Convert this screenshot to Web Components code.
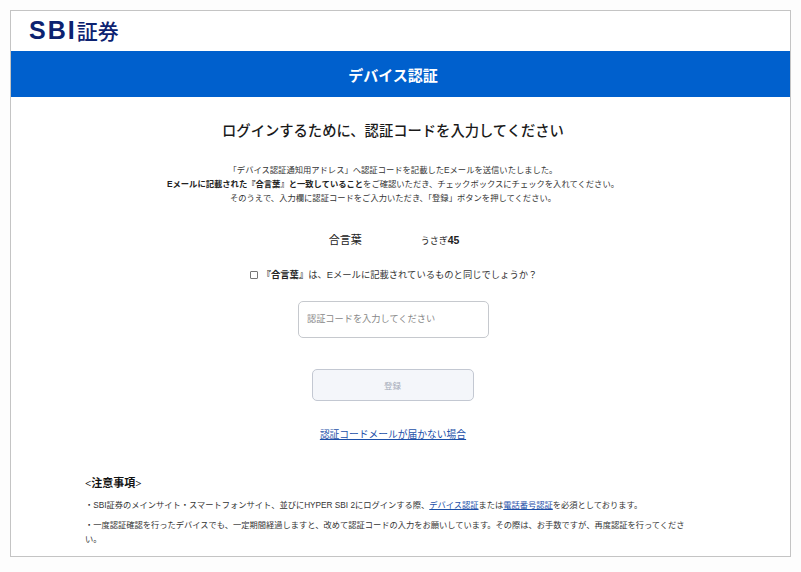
<!DOCTYPE html>
<html lang="ja">
<head>
<meta charset="utf-8">
<title>デバイス認証</title>
<style>
html, body { margin: 0; background: #fdfdfd; }
body { font-family: "Liberation Sans", "Noto Sans CJK JP", sans-serif; color: #333; }
</style>
</head>
<body>
<auth-page>
	<site-header></site-header>
	<title-bar>デバイス認証</title-bar>
	<auth-form></auth-form>
	<notice-list></notice-list>
</auth-page>

<script>
const templateAuthPage = document.createElement('template');
templateAuthPage.innerHTML = `
<style>
:host {
	display: block;
	box-sizing: border-box;
	width: 781px;
	height: 547px;
	margin: 10px 0 0 10px;
	background: #fff;
	border: 1px solid #c4c4c4;
	overflow: hidden;
}
</style>
<slot></slot>
`

class AuthPage extends HTMLElement {
	constructor() {
		super();
		this.attachShadow({mode: 'open'});
		this.shadowRoot.appendChild(templateAuthPage.content.cloneNode(true));
	}
}

const templateSiteHeader = document.createElement('template');
templateSiteHeader.innerHTML = `
<style>
:host {
	display: flex;
	align-items: center;
	box-sizing: border-box;
	height: 40px;
	padding: 0 0 2px 18px;
	color: #0c2270;
}
.sbi {
	font: bold 25px "Liberation Sans", sans-serif;
	letter-spacing: 2px;
}
.sho {
	font: 500 21px "Noto Sans CJK JP", sans-serif;
}
</style>
<span class="sbi">SBI</span><span class="sho">証券</span>
`

class SiteHeader extends HTMLElement {
	constructor() {
		super();
		this.attachShadow({mode: 'open'});
		this.shadowRoot.appendChild(templateSiteHeader.content.cloneNode(true));
	}
}

const templateTitleBar = document.createElement('template');
templateTitleBar.innerHTML = `
<style>
:host {
	display: flex;
	align-items: center;
	justify-content: center;
	height: 46px;
	padding-right: 15px;
	background: #0060cd;
	color: #fff;
	font: bold 15px "Noto Sans CJK JP", sans-serif;
}
</style>
<slot></slot>
`

class TitleBar extends HTMLElement {
	constructor() {
		super();
		this.attachShadow({mode: 'open'});
		this.shadowRoot.appendChild(templateTitleBar.content.cloneNode(true));
	}
}

const templateAuthForm = document.createElement('template');
templateAuthForm.innerHTML = `
<style>
:host {
	display: flex;
	flex-direction: column;
	align-items: center;
	padding-right: 15px;
	font: 8.3px/14px "Liberation Sans", "Noto Sans CJK JP", sans-serif;
	color: #333;
}
h1 {
	margin: 21px 0 0;
	font: 500 14.3px/24px "Noto Sans CJK JP", sans-serif;
	color: #1a1a1a;
}
.lead {
	margin: 21px 0 0;
	text-align: center;
	white-space: nowrap;
}
.lead b { color: #222; }
.phrase {
	display: flex;
	margin: 27px 0 0 2px;
	font-size: 11px;
	line-height: 16px;
	color: #222;
}
.phrase span:first-child { width: 92px; }
.phrase span:last-child { font-size: 9px; }
.phrase b { font-size: 10.5px; }
label {
	display: flex;
	align-items: center;
	margin: 18px 0 0 1px;
	font-size: 9.3px;
	line-height: 16px;
}
input[type=checkbox] {
	appearance: none;
	box-sizing: border-box;
	width: 8px;
	height: 8px;
	margin: 0 4px 0 0;
	background: #fff;
	border: 1px solid #777;
	border-radius: 1px;
}
label b { color: #222; }
input[type=text] {
	box-sizing: border-box;
	display: block;
	width: 191px;
	height: 37px;
	margin: 18px 0 0 1px;
	padding: 0 8px 3px;
	background: #fff;
	border: 1px solid #c6c9ce;
	border-radius: 5px;
	font: 9.2px "Noto Sans CJK JP", sans-serif;
	outline: none;
}
input[type=text]::placeholder { color: #888; }
button {
	display: block;
	box-sizing: border-box;
	width: 162px;
	height: 32px;
	margin: 31px 0 0 -1px;
	padding: 0;
	background: #f4f6fa;
	border: 1px solid #c3c8d2;
	border-radius: 5px;
	color: #a4abb8;
	font: 8.5px "Noto Sans CJK JP", sans-serif;
}
a {
	margin: 26px 0 0;
	color: #1c4fa8;
	font-size: 9.75px;
	line-height: 16px;
}
</style>
<h1>ログインするために、認証コードを入力してください</h1>
<p class="lead">
	「デバイス認証通知用アドレス」へ認証コードを記載したEメールを送信いたしました。<br>
	<b>Eメールに記載された『合言葉』と一致していること</b>をご確認いただき、チェックボックスにチェックを入れてください。<br>
	そのうえで、入力欄に認証コードをご入力いただき、「登録」ボタンを押してください。
</p>
<div class="phrase"><span>合言葉</span><span>うさぎ<b>45</b></span></div>
<label><input type="checkbox"><span><b>『合言葉』</b>は、Eメールに記載されているものと同じでしょうか？</span></label>
<input type="text" placeholder="認証コードを入力してください">
<button disabled>登録</button>
<a href="#">認証コードメールが届かない場合</a>
`

class AuthForm extends HTMLElement {
	constructor() {
		super();
		this.attachShadow({mode: 'open'});
		this.shadowRoot.appendChild(templateAuthForm.content.cloneNode(true));
	}
}

const templateNoticeList = document.createElement('template');
templateNoticeList.innerHTML = `
<style>
:host {
	display: block;
	box-sizing: border-box;
	padding: 32px 95px 0 74px;
	font: 8.25px/14px "Liberation Sans", "Noto Sans CJK JP", sans-serif;
	color: #333;
}
h2 {
	margin: 0;
	font: bold 11px/16px "Liberation Serif", "Noto Sans CJK JP", serif;
	color: #111;
}
p { margin: 8px 0 0; }
p + p { margin-top: 6px; }
a { color: #1c4fa8; }
</style>
<h2>&lt;注意事項&gt;</h2>
<p>・SBI証券のメインサイト・スマートフォンサイト、並びにHYPER SBI 2にログインする際、<a href="#">デバイス認証</a>または<a href="#">電話番号認証</a>を必須としております。</p>
<p>・一度認証確認を行ったデバイスでも、一定期間経過しますと、改めて認証コードの入力をお願いしています。その際は、お手数ですが、再度認証を行ってください。</p>
`

class NoticeList extends HTMLElement {
	constructor() {
		super();
		this.attachShadow({mode: 'open'});
		this.shadowRoot.appendChild(templateNoticeList.content.cloneNode(true));
	}
}

window.customElements.define('auth-page', AuthPage);
window.customElements.define('site-header', SiteHeader);
window.customElements.define('title-bar', TitleBar);
window.customElements.define('auth-form', AuthForm);
window.customElements.define('notice-list', NoticeList);
</script>
</body>
</html>
